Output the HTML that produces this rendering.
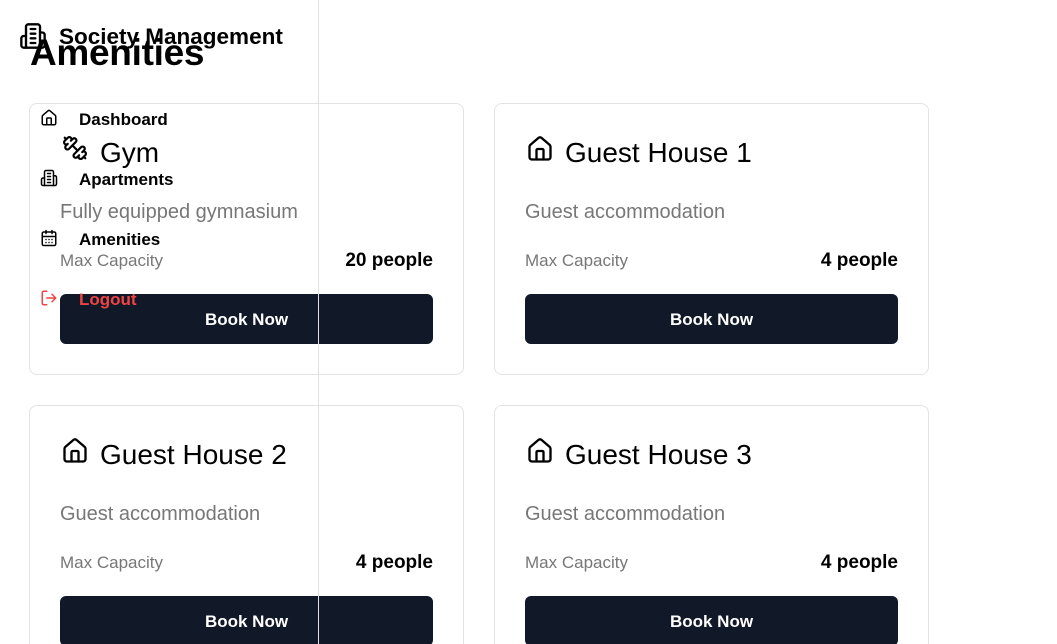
<!DOCTYPE html>
<html style="width:1057px;height:644px;overflow:hidden"><head><meta charset="utf-8"><style>
*{margin:0;padding:0;box-sizing:border-box}
body{width:1057px;height:644px;overflow:hidden;background:#fff;font-family:"Liberation Sans",sans-serif;position:relative;color:#000}
.card{position:absolute;width:435px;height:272px;border:1px solid #e3e3e3;border-radius:8px;background:#fff}
.card .ic{position:absolute;left:30px;top:31px}
.card h2{position:absolute;left:70px;top:31px;font-size:28px;font-weight:400;line-height:36px;white-space:nowrap}
.card .d{position:absolute;left:30px;top:95px;font-size:20px;color:#777;line-height:26px}
.card .m{position:absolute;left:30px;top:146px;font-size:17px;color:#777;line-height:22px}
.card .v{position:absolute;right:30px;top:145px;font-size:19px;font-weight:700;line-height:24px}
.card .b{position:absolute;left:30px;top:190px;width:373px;height:50px;background:#111827;border-radius:6px;color:#fff;font-weight:700;font-size:17px;text-align:center;line-height:52px}
.nav{position:absolute;left:79px;font-size:17px;font-weight:700;line-height:22px}
.ni{position:absolute;left:40px}
</style></head><body>
<div class="card" style="left:29px;top:103px">
<svg class="ic" width="30" height="26" viewBox="0 0 24 24" fill="none" stroke="#000" stroke-width="2" stroke-linecap="round" stroke-linejoin="round"><path d="M14.4 14.4 9.6 9.6"/><path d="M18.66 21.51a2 2 0 1 1-2.83-2.83l-1.770 1.77a2 2 0 1 1-2.83-2.83l6.37-6.37a2 2 0 1 1 2.83 2.83l-1.77 1.77a2 2 0 1 1 2.83 2.83z"/><path d="m21.5 21.5-1.4-1.4"/><path d="M3.9 3.9 2.5 2.5"/><path d="M6.4 12.77a2 2 0 1 1-2.83-2.83l1.77-1.77a2 2 0 1 1-2.83-2.83l2.83-2.83a2 2 0 1 1 2.83 2.83l1.77-1.77a2 2 0 1 1 2.83 2.83z"/></svg>
<h2>Gym</h2><div class="d">Fully equipped gymnasium</div><div class="m">Max Capacity</div><div class="v">20 people</div><div class="b">Book Now</div></div>
<div class="card" style="left:494px;top:103px">
<svg class="ic" width="30" height="28" viewBox="0 0 24 24" fill="none" stroke="#000" stroke-width="2" stroke-linecap="round" stroke-linejoin="round"><path d="M15 21v-8a1 1 0 0 0-1-1h-4a1 1 0 0 0-1 1v8"/><path d="M3 10a2 2 0 0 1 .709-1.528l7-5.999a2 2 0 0 1 2.582 0l7 5.999A2 2 0 0 1 21 10v9a2 2 0 0 1-2 2H5a2 2 0 0 1-2-2z"/></svg>
<h2>Guest House 1</h2><div class="d">Guest accommodation</div><div class="m">Max Capacity</div><div class="v">4 people</div><div class="b">Book Now</div></div>
<div class="card" style="left:29px;top:405px">
<svg class="ic" width="30" height="28" viewBox="0 0 24 24" fill="none" stroke="#000" stroke-width="2" stroke-linecap="round" stroke-linejoin="round"><path d="M15 21v-8a1 1 0 0 0-1-1h-4a1 1 0 0 0-1 1v8"/><path d="M3 10a2 2 0 0 1 .709-1.528l7-5.999a2 2 0 0 1 2.582 0l7 5.999A2 2 0 0 1 21 10v9a2 2 0 0 1-2 2H5a2 2 0 0 1-2-2z"/></svg>
<h2>Guest House 2</h2><div class="d">Guest accommodation</div><div class="m">Max Capacity</div><div class="v">4 people</div><div class="b">Book Now</div></div>
<div class="card" style="left:494px;top:405px">
<svg class="ic" width="30" height="28" viewBox="0 0 24 24" fill="none" stroke="#000" stroke-width="2" stroke-linecap="round" stroke-linejoin="round"><path d="M15 21v-8a1 1 0 0 0-1-1h-4a1 1 0 0 0-1 1v8"/><path d="M3 10a2 2 0 0 1 .709-1.528l7-5.999a2 2 0 0 1 2.582 0l7 5.999A2 2 0 0 1 21 10v9a2 2 0 0 1-2 2H5a2 2 0 0 1-2-2z"/></svg>
<h2>Guest House 3</h2><div class="d">Guest accommodation</div><div class="m">Max Capacity</div><div class="v">4 people</div><div class="b">Book Now</div></div>

<div style="position:absolute;left:318px;top:0;width:1px;height:644px;background:#e0e0e0"></div>
<div style="position:absolute;left:30px;top:32px;font-size:37px;font-weight:700;line-height:42px;letter-spacing:-0.3px">Amenities</div>
<svg style="position:absolute;left:19px;top:22px" width="28" height="28" viewBox="0 0 24 24" fill="none" stroke="#000" stroke-width="2" stroke-linecap="round" stroke-linejoin="round"><path d="M6 22V4a2 2 0 0 1 2-2h8a2 2 0 0 1 2 2v18Z"/><path d="M6 12H4a2 2 0 0 0-2 2v6a2 2 0 0 0 2 2h2"/><path d="M18 9h2a2 2 0 0 1 2 2v9a2 2 0 0 1-2 2h-2"/><path d="M10 6h4M10 10h4M10 14h4M10 18h4"/></svg>
<div style="position:absolute;left:59px;top:24px;font-size:22.5px;font-weight:700;line-height:26px">Society Management</div>

<svg class="ni" style="top:109px" width="18" height="18" viewBox="0 0 24 24" fill="none" stroke="#000" stroke-width="2" stroke-linecap="round" stroke-linejoin="round"><path d="M15 21v-8a1 1 0 0 0-1-1h-4a1 1 0 0 0-1 1v8"/><path d="M3 10a2 2 0 0 1 .709-1.528l7-5.999a2 2 0 0 1 2.582 0l7 5.999A2 2 0 0 1 21 10v9a2 2 0 0 1-2 2H5a2 2 0 0 1-2-2z"/></svg>
<div class="nav" style="top:109px">Dashboard</div>
<svg class="ni" style="top:169px" width="18" height="18" viewBox="0 0 24 24" fill="none" stroke="#000" stroke-width="2" stroke-linecap="round" stroke-linejoin="round"><path d="M6 22V4a2 2 0 0 1 2-2h8a2 2 0 0 1 2 2v18Z"/><path d="M6 12H4a2 2 0 0 0-2 2v6a2 2 0 0 0 2 2h2"/><path d="M18 9h2a2 2 0 0 1 2 2v9a2 2 0 0 1-2 2h-2"/><path d="M10 6h4M10 10h4M10 14h4M10 18h4"/></svg>
<div class="nav" style="top:169px">Apartments</div>
<svg class="ni" style="top:229px" width="18" height="18" viewBox="0 0 24 24" fill="none" stroke="#000" stroke-width="2" stroke-linecap="round" stroke-linejoin="round"><rect x="3" y="4" width="18" height="18" rx="2"/><path d="M16 2v4M8 2v4M3 10h18M8 14h.01M12 14h.01M16 14h.01M8 18h.01M12 18h.01M16 18h.01"/></svg>
<div class="nav" style="top:229px">Amenities</div>
<svg class="ni" style="top:289px" width="18" height="18" viewBox="0 0 24 24" fill="none" stroke="#ef4444" stroke-width="2" stroke-linecap="round" stroke-linejoin="round"><path d="M9 21H5a2 2 0 0 1-2-2V5a2 2 0 0 1 2-2h4"/><path d="m16 17 5-5-5-5M21 12H9"/></svg>
<div class="nav" style="top:289px;color:#ef4444">Logout</div>
</body></html>
